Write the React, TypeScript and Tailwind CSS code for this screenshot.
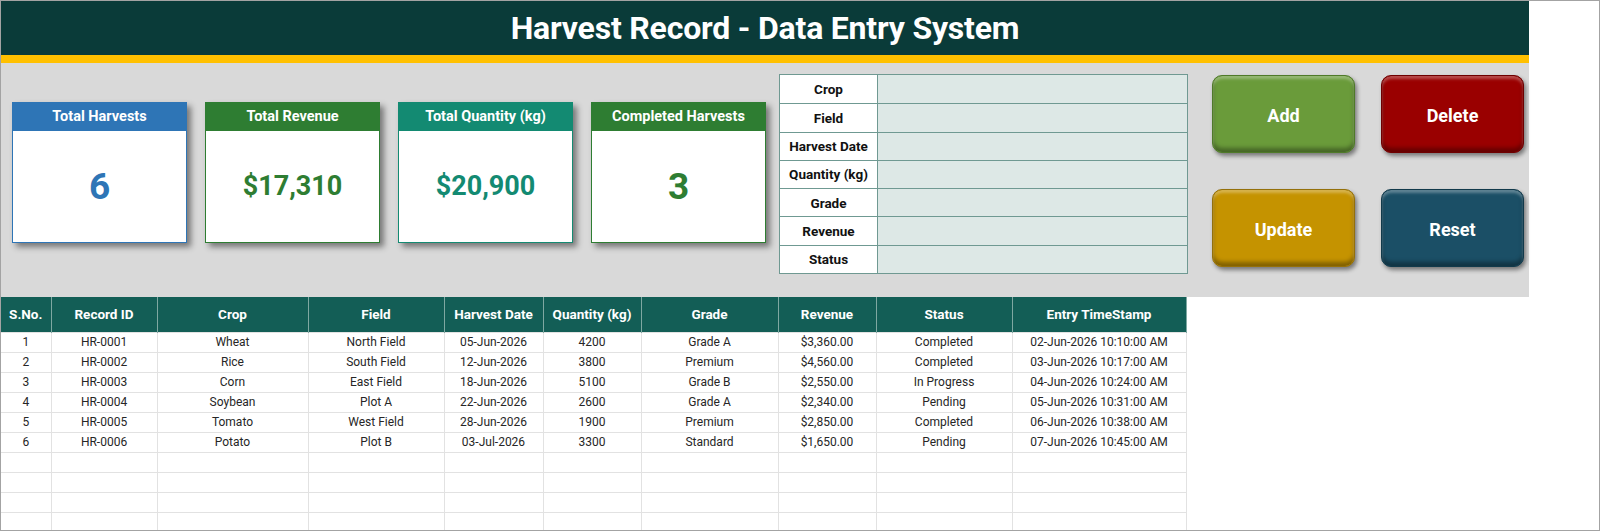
import React from 'react';

const font = { fontFamily: 'Roboto, "Liberation Sans", sans-serif' };

const kpis = [
  { label: 'Total Harvests', value: '6', big: true, head: 'bg-[#2e75b6]', border: 'border-[#2e75b6]', text: 'text-[#2e75b6]' },
  { label: 'Total Revenue', value: '$17,310', big: false, head: 'bg-[#2e7d32]', border: 'border-[#2e7d32]', text: 'text-[#2e7d32]' },
  { label: 'Total Quantity (kg)', value: '$20,900', big: false, head: 'bg-[#138a72]', border: 'border-[#138a72]', text: 'text-[#138a72]' },
  { label: 'Completed Harvests', value: '3', big: true, head: 'bg-[#2e7d32]', border: 'border-[#2e7d32]', text: 'text-[#2e7d32]' },
];

const formFields = ['Crop', 'Field', 'Harvest Date', 'Quantity (kg)', 'Grade', 'Revenue', 'Status'];

const buttons = [
  { label: 'Add', cls: 'bg-[#6a9b3a] border-[#4f7a29]' },
  { label: 'Delete', cls: 'bg-[#9a0000] border-[#6e0000]' },
  { label: 'Update', cls: 'bg-[#c59300] border-[#94700a]' },
  { label: 'Reset', cls: 'bg-[#1b4f66] border-[#123a4b]' },
];

const columns = [
  { header: 'S.No.', w: 'w-[50px]' },
  { header: 'Record ID', w: 'w-[106px]' },
  { header: 'Crop', w: 'w-[151px]' },
  { header: 'Field', w: 'w-[136px]' },
  { header: 'Harvest Date', w: 'w-[99px]' },
  { header: 'Quantity (kg)', w: 'w-[98px]' },
  { header: 'Grade', w: 'w-[137px]' },
  { header: 'Revenue', w: 'w-[98px]' },
  { header: 'Status', w: 'w-[136px]' },
  { header: 'Entry TimeStamp', w: 'w-[174px]' },
];

const rows = [
  ['1', 'HR-0001', 'Wheat', 'North Field', '05-Jun-2026', '4200', 'Grade A', '$3,360.00', 'Completed', '02-Jun-2026 10:10:00 AM'],
  ['2', 'HR-0002', 'Rice', 'South Field', '12-Jun-2026', '3800', 'Premium', '$4,560.00', 'Completed', '03-Jun-2026 10:17:00 AM'],
  ['3', 'HR-0003', 'Corn', 'East Field', '18-Jun-2026', '5100', 'Grade B', '$2,550.00', 'In Progress', '04-Jun-2026 10:24:00 AM'],
  ['4', 'HR-0004', 'Soybean', 'Plot A', '22-Jun-2026', '2600', 'Grade A', '$2,340.00', 'Pending', '05-Jun-2026 10:31:00 AM'],
  ['5', 'HR-0005', 'Tomato', 'West Field', '28-Jun-2026', '1900', 'Premium', '$2,850.00', 'Completed', '06-Jun-2026 10:38:00 AM'],
  ['6', 'HR-0006', 'Potato', 'Plot B', '03-Jul-2026', '3300', 'Standard', '$1,650.00', 'Pending', '07-Jun-2026 10:45:00 AM'],
  ['', '', '', '', '', '', '', '', '', ''],
  ['', '', '', '', '', '', '', '', '', ''],
  ['', '', '', '', '', '', '', '', '', ''],
  ['', '', '', '', '', '', '', '', '', ''],
];

export default function App() {
  return (
    <div style={font} className="w-[1600px] h-[531px] border border-[#a3a3a3] bg-white overflow-hidden">
      {/* Top: title, stripe, dashboard panel */}
      <div className="w-[1528px]">
        <div className="h-[54px] bg-[#0a3b39] flex items-center justify-center">
          <h1 className="text-white font-bold text-[32px] leading-none whitespace-nowrap tracking-[-0.2px]">
            Harvest Record - Data Entry System
          </h1>
        </div>
        <div className="h-[8px] bg-[#ffc000]" />

        <div className="h-[234px] bg-[#d9d9d9] flex items-start pl-[11px]">
          {/* KPI cards */}
          <div className="flex gap-[18px] mt-[39px]">
            {kpis.map((k) => (
              <div
                key={k.label}
                className={`w-[175px] h-[141px] bg-white border ${k.border} flex flex-col shadow-[4px_4px_6px_rgba(0,0,0,0.45)]`}
              >
                <div className={`h-[28px] ${k.head} flex items-center justify-center text-white font-bold text-[14.5px]`}>
                  {k.label}
                </div>
                <div className="flex-1 flex items-center justify-center">
                  <span className={`${k.text} font-bold ${k.big ? 'text-[37px]' : 'text-[27px]'}`}>{k.value}</span>
                </div>
              </div>
            ))}
          </div>

          {/* Entry form */}
          <div className="ml-[13px] mt-[11px] w-[409px] border border-[#6f9992] flex flex-col">
            {formFields.map((f, i) => (
              <div key={f} className={`h-[28.3px] flex ${i > 0 ? 'border-t border-[#6f9992]' : ''}`}>
                <div className="w-[98px] bg-white border-r border-[#6f9992] flex items-center justify-center text-[13.5px] font-bold text-[#111]">
                  {f}
                </div>
                <div className="flex-1 bg-[#dde8e6]" />
              </div>
            ))}
          </div>

          {/* Action buttons */}
          <div className="ml-[24px] mt-[12px] grid grid-cols-[143px_143px] gap-x-[26px] gap-y-[36px]">
            {buttons.map((b) => (
              <button
                key={b.label}
                className={`h-[78px] pt-[3px] rounded-[10px] border ${b.cls} text-white font-bold text-[18px] shadow-[inset_0_3px_3px_rgba(255,255,255,0.3),inset_0_-4px_4px_rgba(0,0,0,0.35),2px_3px_4px_rgba(0,0,0,0.45)]`}
              >
                {b.label}
              </button>
            ))}
          </div>
        </div>
      </div>

      {/* Records table */}
      <table className="border-collapse table-fixed w-[1185px]">
        <thead>
          <tr className="h-[35px] bg-[#135e56]">
            {columns.map((c) => (
              <th
                key={c.header}
                className={`${c.w} p-0 text-white font-bold text-[13.5px] text-center border-x border-[#7fa8a2] first:border-l-0`}
              >
                {c.header}
              </th>
            ))}
          </tr>
        </thead>
        <tbody>
          {rows.map((r, i) => (
            <tr key={i} className="h-[20px]">
              {r.map((cell, j) => (
                <td
                  key={j}
                  className="p-0 text-center text-[12px] text-[#262626] border border-[#e2e2e2] first:border-l-0 leading-none"
                >
                  {cell}
                </td>
              ))}
            </tr>
          ))}
        </tbody>
      </table>
    </div>
  );
}
